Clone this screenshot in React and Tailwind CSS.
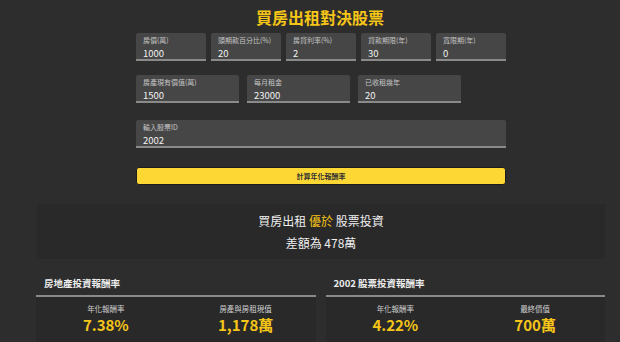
const font = { fontFamily: '"Noto Sans CJK TC", "Noto Sans", sans-serif' };

const Field = ({ label, value }) => (
  <div className="h-[28px] rounded-t-[2px] border-b-2 border-[#8a8a8a] bg-[#464646] px-[7px]">
    <div className="pt-[3px] text-[7px] leading-[9px] text-[#c4c4c4]">{label}</div>
    <div className="mt-[2px] text-[9.5px] leading-[12px] text-[#f2f2f2]">{value}</div>
  </div>
);

const Stat = ({ label, value }) => (
  <div className="flex flex-col items-center">
    <div className="text-[7.5px] leading-[10px] text-[#d0d0d0]">{label}</div>
    <div className="mt-[3px] text-[15px] font-semibold leading-[16px] text-[#f5c518]">{value}</div>
  </div>
);

const ResultCard = ({ title, stats }) => (
  <div className="flex-1">
    <div className="flex h-[24px] items-center pl-[8px] text-[9.5px] font-semibold text-[#eeeeee]">{title}</div>
    <div className="h-[2px] bg-[#8a8a8a]" />
    <div className="grid h-[60px] grid-cols-2 bg-[#292929] pt-[7px]">
      {stats.map((s) => (
        <Stat key={s.label} {...s} />
      ))}
    </div>
  </div>
);

export default function App() {
  return (
    <div style={font} className="h-[342px] w-[620px] overflow-hidden bg-[#2d2d2d]">
      <h1 className="flex h-[33px] items-center justify-center pl-[20px] text-[16px] font-bold text-[#f5c518]">
        買房出租對決股票
      </h1>

      <div className="ml-[136px] w-[370px]">
        <div className="grid grid-cols-5 gap-[5px]">
          <Field label="房價(萬)" value="1000" />
          <Field label="頭期款百分比(%)" value="20" />
          <Field label="房貸利率(%)" value="2" />
          <Field label="貸款期限(年)" value="30" />
          <Field label="寬限期(年)" value="0" />
        </div>

        <div className="mt-[14px] grid w-[325px] grid-cols-3 gap-[8px]">
          <Field label="房產現有價值(萬)" value="1500" />
          <Field label="每月租金" value="23000" />
          <Field label="已收租幾年" value="20" />
        </div>

        <div className="mt-[17px]">
          <Field label="輸入股票ID" value="2002" />
        </div>

        <button
          type="button"
          className="mt-[19px] flex h-[18px] w-full items-center justify-center rounded-[3px] border border-[#1c1c1c] bg-[#fdd835] text-[7px] font-bold text-[#333333]"
        >
          計算年化報酬率
        </button>
      </div>

      <div className="ml-[37px] mt-[19px] flex h-[55px] w-[568px] flex-col items-center justify-center gap-[4px] bg-[#292929] text-[12px] leading-[18px] text-[#eeeeee]">
        <div>
          買房出租 <span className="text-[#f5c518]">優於</span> 股票投資
        </div>
        <div>差額為 478萬</div>
      </div>

      <div className="ml-[36px] mt-[12px] flex w-[569px] gap-[10px]">
        <ResultCard
          title="房地產投資報酬率"
          stats={[
            { label: '年化報酬率', value: '7.38%' },
            { label: '房產與房租現值', value: '1,178萬' },
          ]}
        />
        <ResultCard
          title="2002 股票投資報酬率"
          stats={[
            { label: '年化報酬率', value: '4.22%' },
            { label: '最終價值', value: '700萬' },
          ]}
        />
      </div>
    </div>
  );
}
